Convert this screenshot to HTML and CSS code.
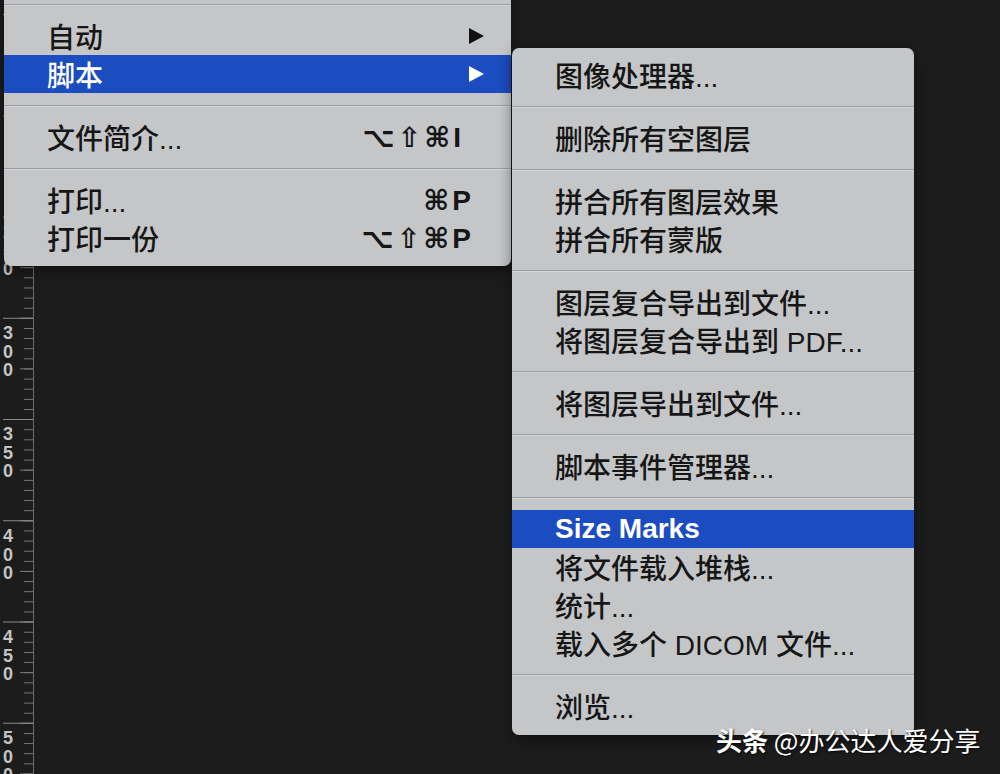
FILE: index.html
```html
<!DOCTYPE html>
<html lang="zh-CN">
<head>
    <meta charset="UTF-8">
    <meta name="viewport" content="width=device-width, initial-scale=1.0">
    <title>脚本菜单</title>
    <link rel="stylesheet" href="styles.css">
</head>
<body>
    <div class="ruler">
        <div class="ruler-label" style="top: 223px">250</div>
        <div class="ruler-label" style="top: 324px">300</div>
        <div class="ruler-label" style="top: 425px">350</div>
        <div class="ruler-label" style="top: 527px">400</div>
        <div class="ruler-label" style="top: 628px">450</div>
        <div class="ruler-label" style="top: 729px">500</div>
    </div>

    <div class="menu main-menu">
        <div class="sep"></div>
        <div class="item"><span>自动</span><span class="arrow"></span></div>
        <div class="item active"><span>脚本</span><span class="arrow"></span></div>
        <div class="sep"></div>
        <div class="item"><span>文件简介...</span><span class="keys narrow">⌥⇧⌘I</span></div>
        <div class="sep"></div>
        <div class="item"><span>打印...</span><span class="keys">⌘P</span></div>
        <div class="item"><span>打印一份</span><span class="keys">⌥⇧⌘P</span></div>
    </div>

    <div class="menu sub-menu">
        <div class="item"><span>图像处理器...</span></div>
        <div class="sep"></div>
        <div class="item"><span>删除所有空图层</span></div>
        <div class="sep"></div>
        <div class="item"><span>拼合所有图层效果</span></div>
        <div class="item"><span>拼合所有蒙版</span></div>
        <div class="sep"></div>
        <div class="item"><span>图层复合导出到文件...</span></div>
        <div class="item"><span>将图层复合导出到 PDF...</span></div>
        <div class="sep"></div>
        <div class="item"><span>将图层导出到文件...</span></div>
        <div class="sep"></div>
        <div class="item"><span>脚本事件管理器...</span></div>
        <div class="sep"></div>
        <div class="item active latin"><span>Size Marks</span></div>
        <div class="item"><span>将文件载入堆栈...</span></div>
        <div class="item"><span>统计...</span></div>
        <div class="item"><span>载入多个 DICOM 文件...</span></div>
        <div class="sep"></div>
        <div class="item"><span>浏览...</span></div>
    </div>

    <div class="watermark"><b>头条</b> @办公达人爱分享</div>
</body>
</html>
```

FILE: styles.css
```css
body {
    margin: 0;
    width: 1000px;
    height: 774px;
    overflow: hidden;
    background-color: #1c1c1c;
    font-family: 'Liberation Sans', 'Noto Sans CJK SC', sans-serif;
    position: relative;
}

/* vertical ruler on the left */
.ruler {
    position: absolute;
    left: 0;
    top: 0;
    width: 33px;
    height: 774px;
    border-right: 1px solid #6c6c6c;
    background-image:
        linear-gradient(to bottom, #8a8a8a 0 1px, transparent 1px),
        linear-gradient(to bottom, #7a7a7a 0 1px, transparent 1px),
        linear-gradient(to bottom, #7a7a7a 0 1px, transparent 1px);
    background-size: 30px 101.25px, 13px 50.625px, 9px 10.125px;
    background-position: right 0 top 14px, right 0 top 14px, right 0 top 4px;
    background-repeat: repeat-y;
}
.ruler-label {
    position: absolute;
    left: 3px;
    width: 12px;
    word-break: break-all;
    font-family: 'Liberation Sans', sans-serif;
    font-weight: bold;
    font-size: 18px;
    line-height: 18.5px;
    color: #c4c4c4;
}

/* menus */
.menu {
    position: absolute;
    background-color: #c5c6c8;
    color: #161616;
    font-size: 28px;
    font-weight: 500;
    box-shadow: 0 4px 14px rgba(0, 0, 0, 0.45);
}
.main-menu {
    left: 4px;
    top: -8px;
    width: 507px;
    padding-bottom: 9px;
    border-radius: 0 0 7px 7px;
}
.sub-menu {
    left: 512px;
    top: 48px;
    width: 402px;
    padding: 8px 0 10px;
    border-radius: 7px;
}
.item {
    display: flex;
    align-items: center;
    justify-content: space-between;
    height: 38px;
    padding: 0 27px 0 43px;
    white-space: nowrap;
}
.item.active {
    background-color: #1b4cc0;
    color: #fff;
}
.latin {
    font-weight: bold;
}
.sep {
    height: 25px;
    display: flex;
    align-items: center;
}
.sep::before {
    content: '';
    flex: 1;
    height: 1px;
    background-color: #9c9da0;
    box-shadow: 0 1px 0 #d3d4d6;
}
.arrow {
    width: 0;
    height: 0;
    border-left: 15px solid #111;
    border-top: 8px solid transparent;
    border-bottom: 8px solid transparent;
}
.active .arrow {
    border-left-color: #fff;
}
.keys {
    margin-right: 10px;
    font-family: 'Liberation Sans', 'DejaVu Sans', sans-serif;
    font-weight: bold;
    font-size: 28px;
    letter-spacing: 3px;
}
.keys.narrow {
    margin-right: 20px;
}

.watermark {
    position: absolute;
    left: 716px;
    top: 723px;
    color: #fff;
    font-family: 'Noto Sans CJK SC', sans-serif;
    font-size: 26px;
    line-height: 34px;
    text-shadow: 1px 1px 2px rgba(0, 0, 0, 0.8);
    white-space: nowrap;
}
```
